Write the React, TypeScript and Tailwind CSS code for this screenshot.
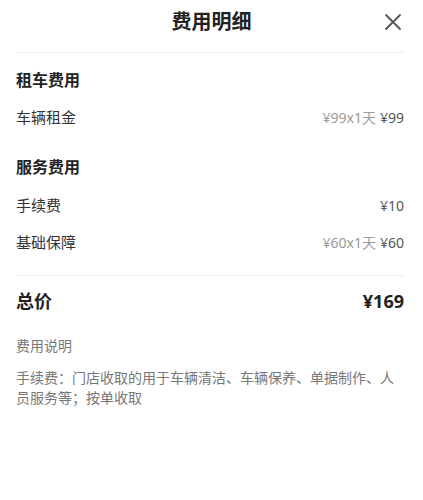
import React from "react";

const font = { fontFamily: '"Noto Sans", "Noto Sans CJK SC", sans-serif' };

function Row({ label, unit, total }: { label: string; unit?: string; total: string }) {
  return (
    <div className="flex items-center justify-between h-[37px]">
      <span className="text-[15px] text-[#333]">{label}</span>
      <span className="flex items-center gap-[4px] text-[14px]">
        {unit && <span className="text-[#9a9a9a]">{unit}</span>}
        <span className="text-[#555]">{total}</span>
      </span>
    </div>
  );
}

export default function App() {
  return (
    <div className="w-[423px] h-[500px] bg-white pl-[16px] pr-[19px]" style={font}>
      <div className="relative flex items-center justify-center h-[53px] pb-[9px] pl-[3px] border-b border-[#efefef]">
        <span className="text-[20px] font-bold text-[#222]">费用明细</span>
        <button className="absolute right-[2px] top-[13px] text-[#555]">
          <svg width="18" height="18" viewBox="0 0 18 18" fill="none" stroke="currentColor" strokeWidth="1.8" strokeLinecap="round">
            <path d="M2 2L16 16M16 2L2 16" />
          </svg>
        </button>
      </div>

      <div className="pt-[12px]">
        <div className="h-[30px] flex items-center text-[16px] font-bold text-[#222]">租车费用</div>
        <div className="mt-[4px]">
          <Row label="车辆租金" unit="¥99x1天" total="¥99" />
        </div>
        <div className="h-[30px] mt-[16px] flex items-center text-[16px] font-bold text-[#222]">服务费用</div>
        <div className="mt-[5px]">
          <Row label="手续费" total="¥10" />
          <Row label="基础保障" unit="¥60x1天" total="¥60" />
        </div>
      </div>

      <div className="mt-[14px] border-t border-[#efefef] pt-[10px]">
        <div className="flex items-center justify-between h-[30px]">
          <span className="text-[18px] font-bold text-[#222]">总价</span>
          <span className="text-[18px] font-bold text-[#222]">¥169</span>
        </div>
        <div className="mt-[19px] text-[14px] text-[#777]">费用说明</div>
        <div className="mt-[12px] text-[14px] leading-[20px] text-[#777]">
          手续费：门店收取的用于车辆清洁、车辆保养、单据制作、人员服务等；按单收取
        </div>
      </div>
    </div>
  );
}
